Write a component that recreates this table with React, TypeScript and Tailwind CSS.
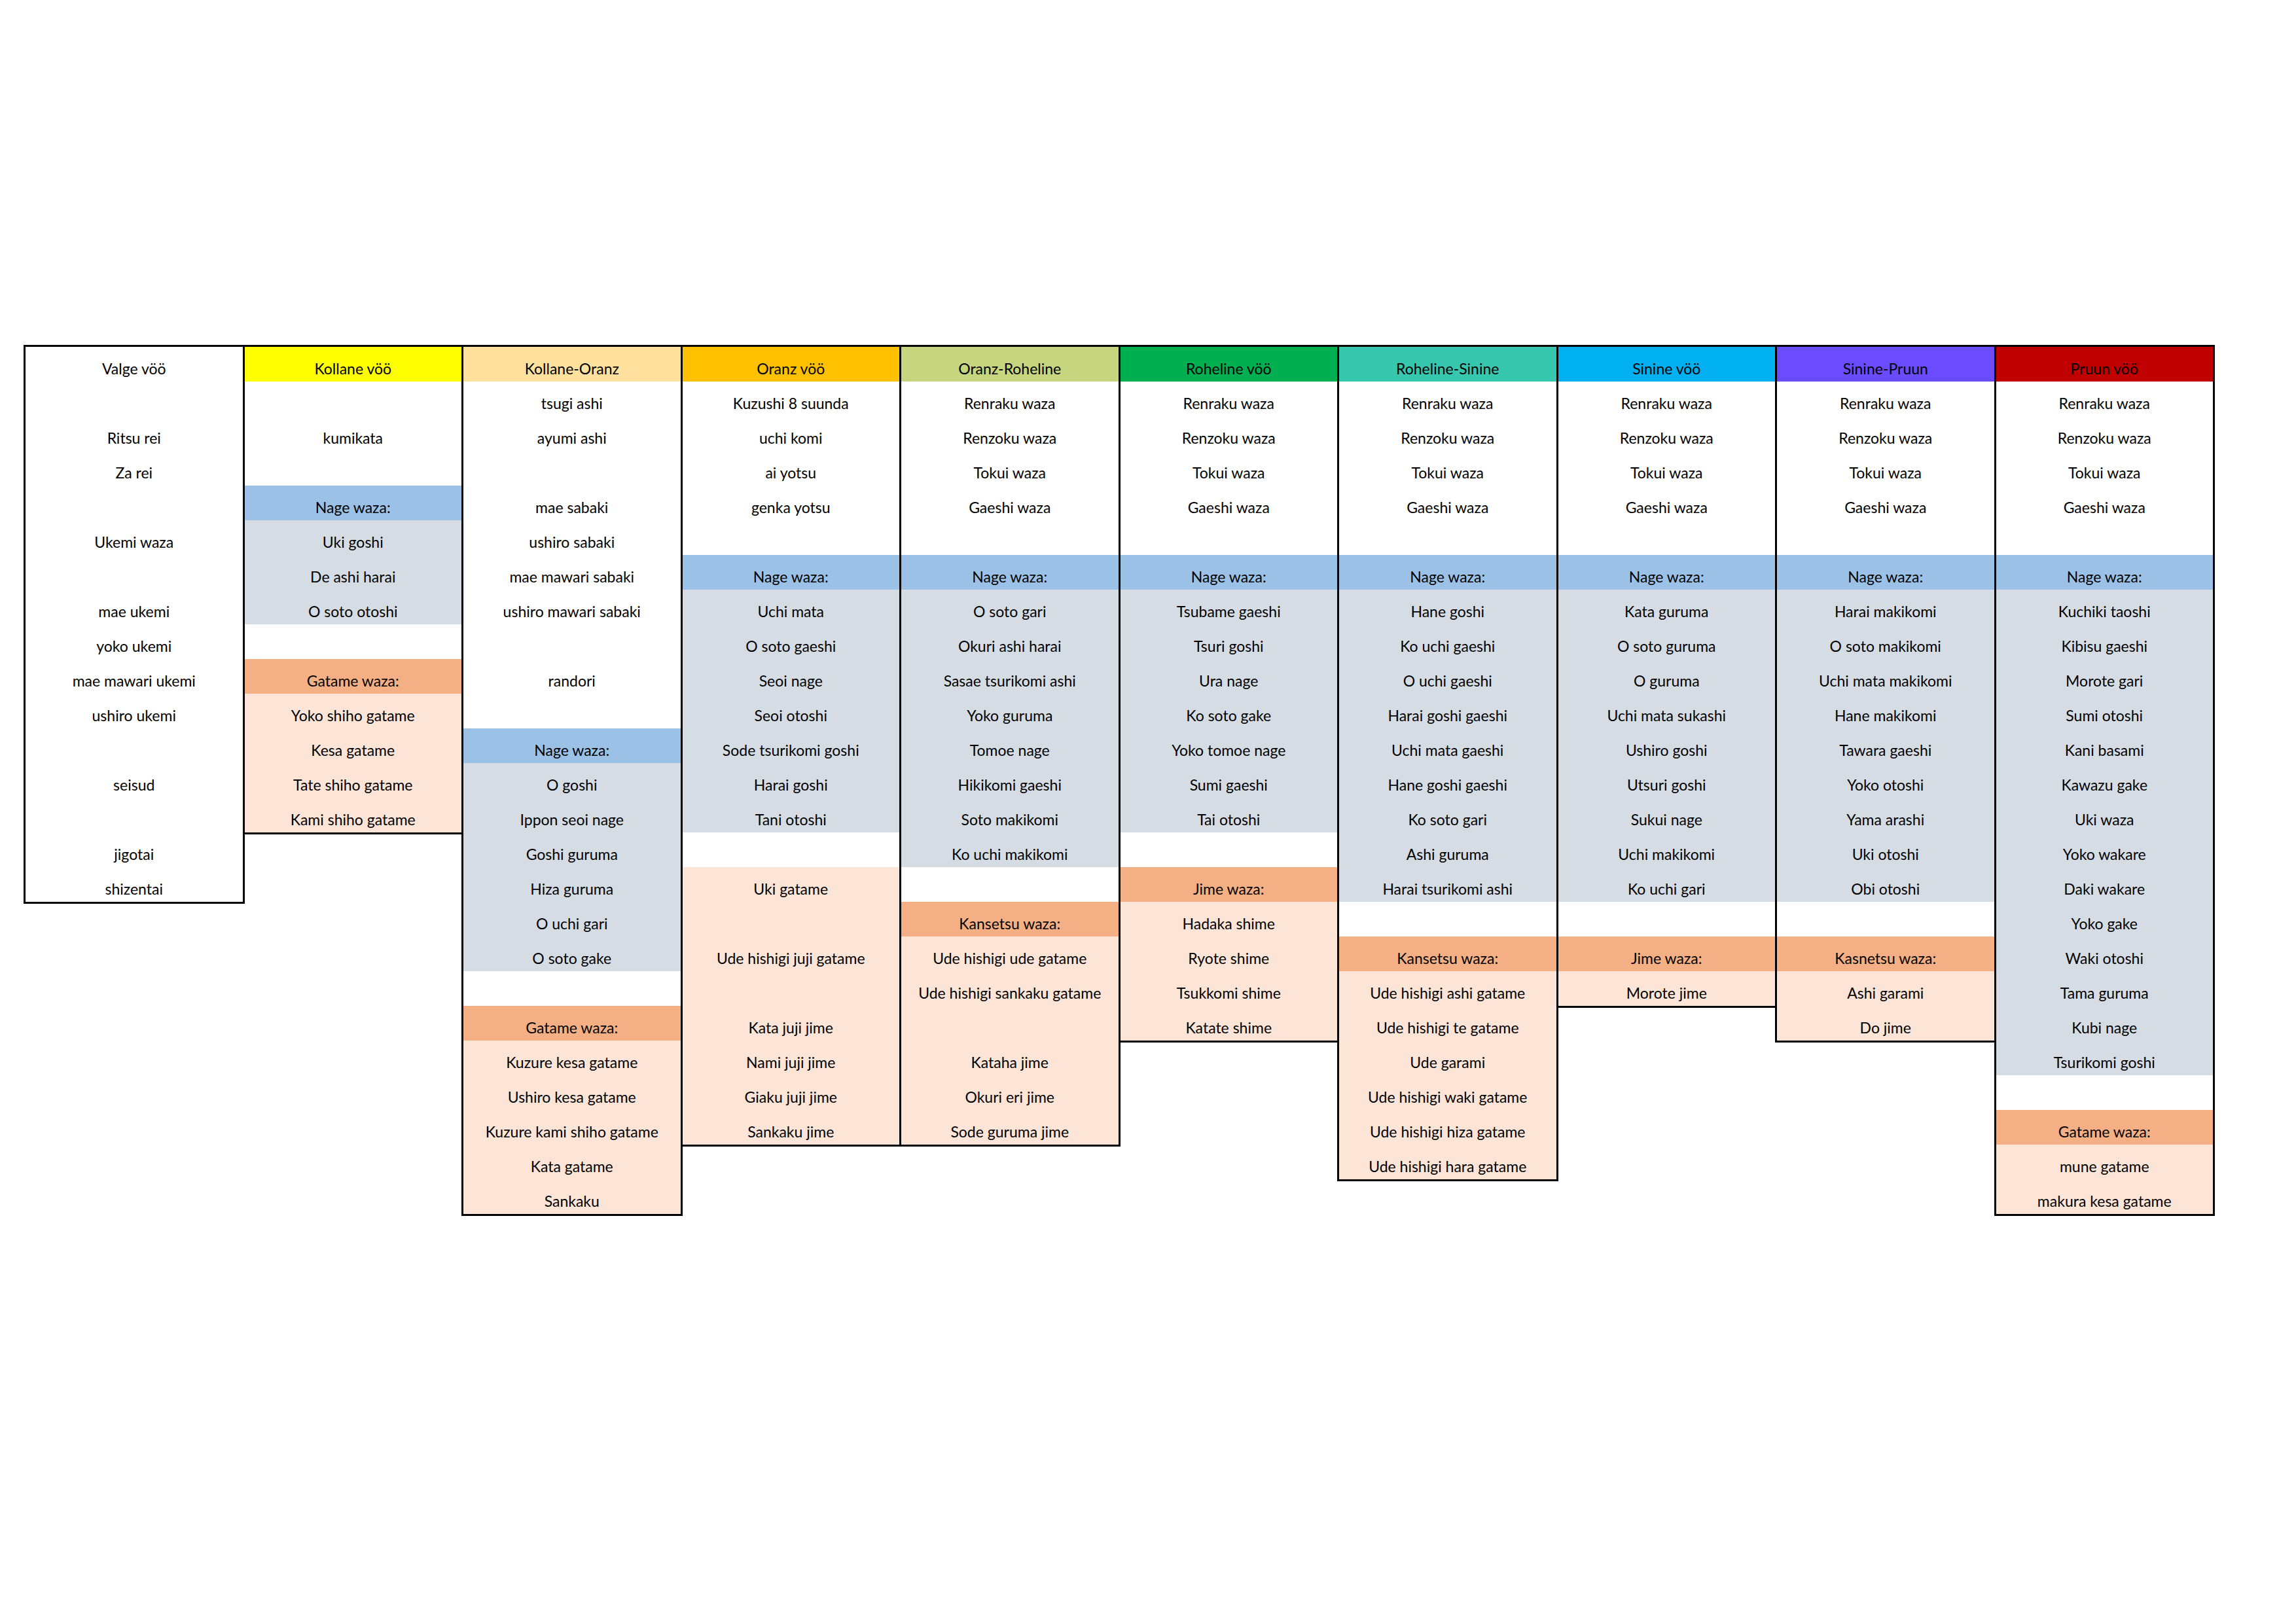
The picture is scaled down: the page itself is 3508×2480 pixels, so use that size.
import React from "react";

// cell kinds: "" white, "N" nage header, "n" nage item, "G" gatame header, "g" gatame item
const bg: Record<string, string> = {
  "": "bg-white",
  N: "bg-[#9bc2e6]",
  n: "bg-[#d6dce4]",
  G: "bg-[#f4b084]",
  g: "bg-[#fce4d6]",
};

type Belt = { name: string; head: string; rows: string[] };

const kokku = ["Renraku waza", "Renzoku waza", "Tokui waza", "Gaeshi waza", ""];

const belts: Belt[] = [
  {
    name: "Valge vöö",
    head: "bg-white",
    rows: ["", "Ritsu rei", "Za rei", "", "Ukemi waza", "", "mae ukemi", "yoko ukemi", "mae mawari ukemi", "ushiro ukemi", "", "seisud", "", "jigotai", "shizentai"],
  },
  {
    name: "Kollane vöö",
    head: "bg-[#ffff00]",
    rows: ["", "kumikata", "", "N|Nage waza:", "n|Uki goshi", "n|De ashi harai", "n|O soto otoshi", "", "G|Gatame waza:", "g|Yoko shiho gatame", "g|Kesa gatame", "g|Tate shiho gatame", "g|Kami shiho gatame"],
  },
  {
    name: "Kollane-Oranz",
    head: "bg-[#ffe09d]",
    rows: ["tsugi ashi", "ayumi ashi", "", "mae sabaki", "ushiro sabaki", "mae mawari sabaki", "ushiro mawari sabaki", "", "randori", "", "N|Nage waza:", "n|O goshi", "n|Ippon seoi nage", "n|Goshi guruma", "n|Hiza guruma", "n|O uchi gari", "n|O soto gake", "", "G|Gatame waza:", "g|Kuzure kesa gatame", "g|Ushiro kesa gatame", "g|Kuzure kami shiho gatame", "g|Kata gatame", "g|Sankaku"],
  },
  {
    name: "Oranz vöö",
    head: "bg-[#ffc000]",
    rows: ["Kuzushi 8 suunda", "uchi komi", "ai yotsu", "genka yotsu", "", "N|Nage waza:", "n|Uchi mata", "n|O soto gaeshi", "n|Seoi nage", "n|Seoi otoshi", "n|Sode tsurikomi goshi", "n|Harai goshi", "n|Tani otoshi", "", "g|Uki gatame", "g|", "g|Ude hishigi juji gatame", "g|", "g|Kata juji jime", "g|Nami juji jime", "g|Giaku juji jime", "g|Sankaku jime"],
  },
  {
    name: "Oranz-Roheline",
    head: "bg-[#c6d57e]",
    rows: [...kokku, "N|Nage waza:", "n|O soto gari", "n|Okuri ashi harai", "n|Sasae tsurikomi ashi", "n|Yoko guruma", "n|Tomoe nage", "n|Hikikomi gaeshi", "n|Soto makikomi", "n|Ko uchi makikomi", "", "G|Kansetsu waza:", "g|Ude hishigi ude gatame", "g|Ude hishigi sankaku gatame", "g|", "g|Kataha jime", "g|Okuri eri jime", "g|Sode guruma jime"],
  },
  {
    name: "Roheline vöö",
    head: "bg-[#00b050]",
    rows: [...kokku, "N|Nage waza:", "n|Tsubame gaeshi", "n|Tsuri goshi", "n|Ura nage", "n|Ko soto gake", "n|Yoko tomoe nage", "n|Sumi gaeshi", "n|Tai otoshi", "", "G|Jime waza:", "g|Hadaka shime", "g|Ryote shime", "g|Tsukkomi shime", "g|Katate shime"],
  },
  {
    name: "Roheline-Sinine",
    head: "bg-[#37c6ae]",
    rows: [...kokku, "N|Nage waza:", "n|Hane goshi", "n|Ko uchi gaeshi", "n|O uchi gaeshi", "n|Harai goshi gaeshi", "n|Uchi mata gaeshi", "n|Hane goshi gaeshi", "n|Ko soto gari", "n|Ashi guruma", "n|Harai tsurikomi ashi", "", "G|Kansetsu waza:", "g|Ude hishigi ashi gatame", "g|Ude hishigi te gatame", "g|Ude garami", "g|Ude hishigi waki gatame", "g|Ude hishigi hiza gatame", "g|Ude hishigi hara gatame"],
  },
  {
    name: "Sinine vöö",
    head: "bg-[#00b0f0]",
    rows: [...kokku, "N|Nage waza:", "n|Kata guruma", "n|O soto guruma", "n|O guruma", "n|Uchi mata sukashi", "n|Ushiro goshi", "n|Utsuri goshi", "n|Sukui nage", "n|Uchi makikomi", "n|Ko uchi gari", "", "G|Jime waza:", "g|Morote jime"],
  },
  {
    name: "Sinine-Pruun",
    head: "bg-[#6b4cfc]",
    rows: [...kokku, "N|Nage waza:", "n|Harai makikomi", "n|O soto makikomi", "n|Uchi mata makikomi", "n|Hane makikomi", "n|Tawara gaeshi", "n|Yoko otoshi", "n|Yama arashi", "n|Uki otoshi", "n|Obi otoshi", "", "G|Kasnetsu waza:", "g|Ashi garami", "g|Do jime"],
  },
  {
    name: "Pruun vöö",
    head: "bg-[#c00000]",
    rows: [...kokku, "N|Nage waza:", "n|Kuchiki taoshi", "n|Kibisu gaeshi", "n|Morote gari", "n|Sumi otoshi", "n|Kani basami", "n|Kawazu gake", "n|Uki waza", "n|Yoko wakare", "n|Daki wakare", "n|Yoko gake", "n|Waki otoshi", "n|Tama guruma", "n|Kubi nage", "n|Tsurikomi goshi", "", "G|Gatame waza:", "g|mune gatame", "g|makura kesa gatame"],
  },
];

const Cell = ({ text, cls }: { text: string; cls: string }) => (
  <div className={`h-[53px] flex items-end justify-center pb-[8px] text-[23px] leading-none whitespace-nowrap text-black ${cls}`}>
    {text}
  </div>
);

export default function App() {
  return (
    <div
      className="w-[3508px] h-[2480px] bg-white pt-[527px] pl-[36px]"
      style={{ fontFamily: "Lato, 'Liberation Sans', sans-serif" }}
    >
      <div className="flex items-start">
        {belts.map((b, i) => (
          <div key={b.name} className={`w-[337.5px] flex flex-col border-[3px] border-black ${i > 0 ? "-ml-[3px]" : ""}`}>
            <Cell text={b.name} cls={b.head} />
            {b.rows.map((r, j) => {
              const [k, t] = r.includes("|") ? r.split("|") : ["", r];
              return <Cell key={j} text={t} cls={bg[k]} />;
            })}
          </div>
        ))}
      </div>
    </div>
  );
}
